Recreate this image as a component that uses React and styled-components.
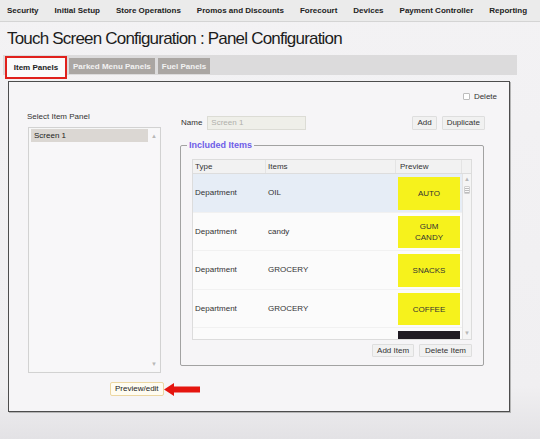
import React from "react";
import styled, { createGlobalStyle } from "styled-components";

const Global = createGlobalStyle`
  html, body { margin: 0; padding: 0; }
  body {
    font-family: "Liberation Sans", Arial, sans-serif;
    color: #222;
    background: #f1f0f2;
  }
  * { box-sizing: border-box; }
`;

const Page = styled.div`
  width: 540px;
  height: 439px;
  overflow: hidden;
  background: linear-gradient(to bottom, #f3f2f4 0%, #f0eff1 88%, #e3e2e5 100%);
`;

const Nav = styled.nav`
  height: 22px;
  display: flex;
  align-items: center;
  gap: 16px;
  padding-left: 7px;
  background: #ebebeb;
  border-bottom: 1px solid #d4d4d4;
  font-size: 8px;
  font-weight: bold;
  color: #222;
  white-space: nowrap;
`;

const Title = styled.h1`
  margin: 0;
  padding: 7px 0 0 7px;
  font-size: 17px;
  line-height: 19px;
  font-weight: normal;
  letter-spacing: -0.8px;
  color: #1c1c1c;
  white-space: nowrap;
`;

const TabBar = styled.div`
  margin: 7px 0 0 3px;
  width: 514px;
  height: 20px;
  background: #dcdbdc;
  display: flex;
  align-items: flex-start;
  padding-left: 2px;
  gap: 2px;
`;

const Tab = styled.div`
  flex-shrink: 0;
  display: flex;
  align-items: center;
  justify-content: center;
  font-size: 8px;
  font-weight: bold;
  white-space: nowrap;
  ${(p) =>
    p.$active
      ? `
    margin-top: 1px;
    height: 23px;
    width: 62px;
    background: #fbfbfb;
    border: 2px solid #e0201c;
    color: #222;
    position: relative;
    z-index: 1;
  `
      : `
    margin-top: 3px;
    height: 16px;
    padding: 0 4px;
    margin-left: ${p.$gap || 0}px;
    background: #aaa6a3;
    color: #f2f2f2;
  `}
`;

const Panel = styled.section`
  margin: 6px 0 0 8px;
  width: 502px;
  height: 331px;
  border: 1px solid #4d4d4d;
  background: #f6f5f7;
  box-shadow: 1px 1px 0 #b5b5b5;
`;

const DeleteRow = styled.div`
  margin-top: 9px;
  height: 10px;
  display: flex;
  justify-content: flex-end;
  align-items: center;
  gap: 4px;
  padding-right: 12px;
  font-size: 8px;
  color: #333;
`;

const CheckBox = styled.span`
  width: 7px;
  height: 7px;
  border: 1px solid #bdbdbd;
  border-radius: 1px;
  background: #fff;
`;

const Body = styled.div`
  margin-top: 8px;
  display: flex;
  padding-left: 18px;
`;

const LeftCol = styled.div`
  width: 134px;
  flex-shrink: 0;
  display: flex;
  flex-direction: column;
`;

const FieldLabel = styled.div`
  margin-top: 3px;
  font-size: 8px;
  line-height: 10px;
  color: #333;
  white-space: nowrap;
`;

const ListBox = styled.div`
  margin: 5px 0 0 1px;
  width: 133px;
  height: 246px;
  border: 1px solid #d2d2d2;
  box-shadow: inset 0 0 0 1px #f7f7f7;
  background: #f8f7f9;
  display: flex;
  padding: 1px 0 1px 2px;
`;

const ListItems = styled.div`
  flex: 1;
`;

const ListItem = styled.div`
  height: 13px;
  line-height: 13px;
  padding-left: 3px;
  font-size: 8px;
  color: #222;
  background: ${(p) => (p.$selected ? "#dbd7d3" : "transparent")};
`;

const ScrollCol = styled.div`
  width: ${(p) => p.$w || 12}px;
  flex-shrink: 0;
  display: flex;
  flex-direction: column;
  justify-content: space-between;
  align-items: center;
  padding: ${(p) => p.$pad || "4px 0"};
  color: #b8b8b8;
  font-size: 6px;
  line-height: 6px;
  ${(p) => p.$track && `background: #f5f5f5; border-left: 1px solid #e3e3e3;`}
`;

const Grip = styled.div`
  width: 6px;
  height: 8px;
  margin-top: 4px;
  border: 1px solid #d0d0d0;
  background: repeating-linear-gradient(to bottom, #fafafa 0 1px, #bdbdbd 1px 2px);
  border-radius: 1px;
`;

const ScrollTop = styled.div`
  display: flex;
  flex-direction: column;
  align-items: center;
`;

const ActionRow = styled.div`
  margin-top: 9px;
  padding-left: 83px;
  display: flex;
  align-items: center;
`;

const PreviewButton = styled.button`
  flex-shrink: 0;
  height: 14px;
  padding: 0 4px;
  font-family: inherit;
  font-size: 8px;
  line-height: 12px;
  color: #222;
  background: #fffcf1;
  border: 1px solid #ecd7a2;
  border-radius: 2px;
  white-space: nowrap;
`;

const Arrow = styled.svg`
  flex-shrink: 0;
  display: block;
`;

const RightCol = styled.div`
  margin-left: 19px;
  width: 305px;
  flex-shrink: 0;
  display: flex;
  flex-direction: column;
`;

const NameRow = styled.div`
  margin-top: 6px;
  height: 15px;
  display: flex;
  align-items: center;
  padding-left: 1px;
  font-size: 8px;
  color: #333;
`;

const NameInput = styled.div`
  margin-left: 5px;
  width: 99px;
  height: 14px;
  line-height: 12px;
  padding-left: 3px;
  background: #efefe9;
  border: 1px solid #dcdcd5;
  color: #b0b0ab;
  font-size: 8px;
`;

const Spacer = styled.div`
  flex: 1;
`;

const Btn = styled.button`
  flex-shrink: 0;
  height: ${(p) => p.$h || 14}px;
  padding: 0 ${(p) => p.$px || 4}px;
  margin-left: ${(p) => p.$ml || 0}px;
  font-family: inherit;
  font-size: 8px;
  line-height: 11px;
  color: #333;
  background: #f1f1f1;
  border: 1px solid #dedede;
  border-radius: 1px;
  white-space: nowrap;
`;

const FieldSet = styled.fieldset`
  margin: 10px 0 0 0;
  width: 304px;
  min-width: 0;
  padding: 9px 11px 8px 11px;
  border: 1px solid #a2a2a2;
  border-radius: 2px;
`;

const Legend = styled.legend`
  margin-left: -5px;
  padding: 0 2px;
  font-size: 9px;
  line-height: 10px;
  font-weight: bold;
  color: #6e5de8;
`;

const TableBox = styled.div`
  width: 280px;
  border: 1px solid #dcdcdc;
  background: #fbfbfb;
`;

const HeaderRow = styled.div`
  display: grid;
  grid-template-columns: 73px 130px 66px 9px;
  height: 14px;
  background: #f2f2f2;
  border-bottom: 1px solid #dddddd;
`;

const HeadCell = styled.div`
  padding-left: ${(p) => p.$pl ?? 2}px;
  font-size: 8px;
  line-height: 13px;
  color: #333;
  border-right: ${(p) => (p.$last ? "none" : "1px solid #e4e4e4")};
`;

const TableBody = styled.div`
  display: flex;
  height: 165px;
`;

const Rows = styled.div`
  flex: 1;
  overflow: hidden;
`;

const Row = styled.div`
  display: grid;
  grid-template-columns: 73px 130px 66px;
  height: 38.6px;
  align-items: center;
  background: ${(p) => (p.$hl ? "#e6edf6" : "#fbfbfb")};
  border-bottom: 1px solid #f1f1f1;
  font-size: 8px;
  color: #333;
`;

const Cell = styled.div`
  padding-left: 2px;
  white-space: nowrap;
`;

const Swatch = styled.div`
  align-self: start;
  margin: 3px 0 0 2px;
  width: 62px;
  height: 32.5px;
  background: ${(p) => p.$color};
  display: flex;
  align-items: center;
  justify-content: center;
  text-align: center;
  font-size: 8px;
  line-height: 11px;
  color: #333;
`;

const FieldActions = styled.div`
  margin-top: 4px;
  display: flex;
  justify-content: flex-end;
`;

const navItems = [
  "Security",
  "Initial Setup",
  "Store Operations",
  "Promos and Discounts",
  "Forecourt",
  "Devices",
  "Payment Controller",
  "Reporting",
];

const rows = [
  { type: "Department", item: "OIL", label: "AUTO", hl: true },
  { type: "Department", item: "candy", label: "GUM\nCANDY" },
  { type: "Department", item: "GROCERY", label: "SNACKS" },
  { type: "Department", item: "GROCERY", label: "COFFEE" },
  { type: "", item: "", label: "", dark: true },
];

export default function App() {
  return (
    <Page>
      <Global />
      <Nav>
        {navItems.map((n) => (
          <span key={n}>{n}</span>
        ))}
      </Nav>
      <Title>Touch Screen Configuration : Panel Configuration</Title>
      <TabBar>
        <Tab $active>Item Panels</Tab>
        <Tab>Parked Menu Panels</Tab>
        <Tab $gap={1}>Fuel Panels</Tab>
      </TabBar>
      <Panel>
        <DeleteRow>
          <CheckBox />
          <span>Delete</span>
        </DeleteRow>
        <Body>
          <LeftCol>
            <FieldLabel>Select Item Panel</FieldLabel>
            <ListBox>
              <ListItems>
                <ListItem $selected>Screen 1</ListItem>
              </ListItems>
              <ScrollCol>
                <span>▲</span>
                <span>▼</span>
              </ScrollCol>
            </ListBox>
            <ActionRow>
              <PreviewButton>Preview/edit</PreviewButton>
              <Arrow width="36" height="13" viewBox="0 0 36 13">
                <polygon
                  points="0,6.5 10,0 10,3.5 36,3.5 36,9.5 10,9.5 10,13"
                  fill="#e5150f"
                />
              </Arrow>
            </ActionRow>
          </LeftCol>
          <RightCol>
            <NameRow>
              <span>Name</span>
              <NameInput>Screen 1</NameInput>
              <Spacer />
              <Btn>Add</Btn>
              <Btn $ml={5}>Duplicate</Btn>
            </NameRow>
            <FieldSet>
              <Legend>Included Items</Legend>
              <TableBox>
                <HeaderRow>
                  <HeadCell>Type</HeadCell>
                  <HeadCell>Items</HeadCell>
                  <HeadCell $pl={4}>Preview</HeadCell>
                  <HeadCell $last />
                </HeaderRow>
                <TableBody>
                  <Rows>
                    {rows.map((r, i) => (
                      <Row key={i} $hl={r.hl}>
                        <Cell>{r.type}</Cell>
                        <Cell>{r.item}</Cell>
                        <Swatch $color={r.dark ? "#1f1b22" : "#f6f21c"}>
                          <span style={{ whiteSpace: "pre-line" }}>{r.label}</span>
                        </Swatch>
                      </Row>
                    ))}
                  </Rows>
                  <ScrollCol $w={9} $track $pad="2px 0 3px">
                    <ScrollTop>
                      <span>▲</span>
                      <Grip />
                    </ScrollTop>
                    <span>▼</span>
                  </ScrollCol>
                </TableBody>
              </TableBox>
              <FieldActions>
                <Btn $h={13}>Add Item</Btn>
                <Btn $h={13} $ml={5} $px={5}>Delete Item</Btn>
              </FieldActions>
            </FieldSet>
          </RightCol>
        </Body>
      </Panel>
    </Page>
  );
}
